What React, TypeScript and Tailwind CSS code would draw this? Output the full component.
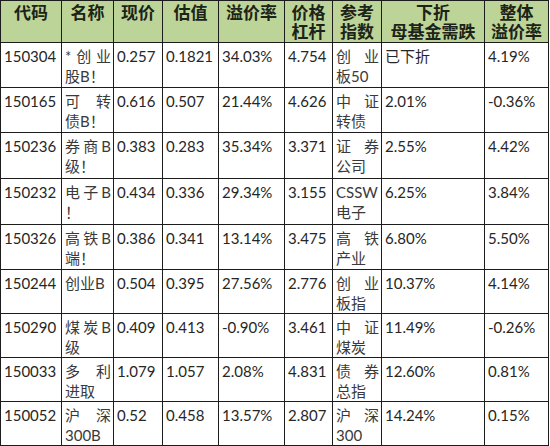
import React from 'react';

type Row = {
  code: string;
  name: string[];
  price: string;
  nav: string;
  premium: string;
  lever: string;
  index: string[];
  drop: string;
  total: string;
  h: string;
};

const rows: Row[] = [
  { code: '150304', name: ['*创业', '股B！'], price: '0.257', nav: '0.1821', premium: '34.03%', lever: '4.754', index: ['创业', '板50'], drop: '已下折', total: '4.19%', h: 'h-[45px]' },
  { code: '150165', name: ['可转', '债B！'], price: '0.616', nav: '0.507', premium: '21.44%', lever: '4.626', index: ['中证', '转债'], drop: '2.01%', total: '-0.36%', h: 'h-[45px]' },
  { code: '150236', name: ['券商B', '级！'], price: '0.383', nav: '0.283', premium: '35.34%', lever: '3.371', index: ['证券', '公司'], drop: '2.55%', total: '4.42%', h: 'h-[46px]' },
  { code: '150232', name: ['电子B', '！'], price: '0.434', nav: '0.336', premium: '29.34%', lever: '3.155', index: ['CSSW', '电子'], drop: '6.25%', total: '3.84%', h: 'h-[46px]' },
  { code: '150326', name: ['高铁B', '端！'], price: '0.386', nav: '0.341', premium: '13.14%', lever: '3.475', index: ['高铁', '产业'], drop: '6.80%', total: '5.50%', h: 'h-[45px]' },
  { code: '150244', name: ['创业B'], price: '0.504', nav: '0.395', premium: '27.56%', lever: '2.776', index: ['创业', '板指'], drop: '10.37%', total: '4.14%', h: 'h-[44px]' },
  { code: '150290', name: ['煤炭B', '级'], price: '0.409', nav: '0.413', premium: '-0.90%', lever: '3.461', index: ['中证', '煤炭'], drop: '11.49%', total: '-0.26%', h: 'h-[44px]' },
  { code: '150033', name: ['多利', '进取'], price: '1.079', nav: '1.057', premium: '2.08%', lever: '4.831', index: ['债券', '总指'], drop: '12.60%', total: '0.81%', h: 'h-[44px]' },
  { code: '150052', name: ['沪深', '300B'], price: '0.52', nav: '0.458', premium: '13.57%', lever: '2.807', index: ['沪深', '300'], drop: '14.24%', total: '0.15%', h: 'h-[43px]' },
];

const th = 'border border-[#1c1c1c] bg-[#bcd497] align-top p-0 pt-[2px] text-center font-bold text-[17px] text-[#1d2318]';
const td = 'border border-[#1c1c1c] align-top p-0 pl-[3px] pt-[3px] text-[15px] text-[#262626]';
const line = 'h-[20px] leading-[20px] overflow-hidden whitespace-nowrap [text-spacing-trim:space-all]';
const hline = 'h-[19px] leading-[19px] overflow-hidden whitespace-nowrap';

// fullwidth "！" taken from the CJK face so it keeps its full width
function Text({ s }: { s: string }) {
  const parts = s.split('！');
  return (
    <>
      {parts.map((p, i) => (
        <React.Fragment key={i}>
          {p}
          {i < parts.length - 1 && (
            <span className="inline-block w-[15px] text-center" style={{ fontFamily: "'Noto Sans CJK SC', sans-serif" }}>！</span>
          )}
        </React.Fragment>
      ))}
    </>
  );
}

// two-line wrapped cells: first line spread across the cell like Excel's distributed text
function Wrapped({ lines }: { lines: string[] }) {
  if (lines.length === 1) return <div className={`${line} text-[#3a3a3a]`}>{lines[0]}</div>;
  return (
    <>
      <div className={`${line} pr-[2px] text-justify [text-align-last:justify] text-[#3a3a3a]`}>{lines[0]}</div>
      <div className={`${line} text-[#3a3a3a]`}><Text s={lines[1]} /></div>
    </>
  );
}

function Head({ lines }: { lines: string[] }) {
  return (
    <>
      {lines.map((l) => (
        <div key={l} className={hline}>{l}</div>
      ))}
    </>
  );
}

export default function App() {
  return (
    <div className="w-[550px] h-[446px] bg-white overflow-hidden" style={{ fontFamily: "Lato, 'Noto Sans CJK SC', sans-serif" }}>
      <table className="table-fixed border-collapse w-[549px]">
        <colgroup>
          <col className="w-[61px]" />
          <col className="w-[52px]" />
          <col className="w-[49px]" />
          <col className="w-[56px]" />
          <col className="w-[66px]" />
          <col className="w-[48px]" />
          <col className="w-[49px]" />
          <col className="w-[103px]" />
          <col className="w-[64px]" />
        </colgroup>
        <thead>
          <tr className="h-[42px]">
            <th className={th}><Head lines={['代码']} /></th>
            <th className={th}><Head lines={['名称']} /></th>
            <th className={th}><Head lines={['现价']} /></th>
            <th className={th}><Head lines={['估值']} /></th>
            <th className={th}><Head lines={['溢价率']} /></th>
            <th className={th}><Head lines={['价格', '杠杆']} /></th>
            <th className={th}><Head lines={['参考', '指数']} /></th>
            <th className={th}><Head lines={['下折', '母基金需跌']} /></th>
            <th className={th}><Head lines={['整体', '溢价率']} /></th>
          </tr>
        </thead>
        <tbody>
          {rows.map((r) => (
            <tr key={r.code} className={r.h}>
              <td className={td}><div className={line}>{r.code}</div></td>
              <td className={td}><Wrapped lines={r.name} /></td>
              <td className={td}><div className={line}>{r.price}</div></td>
              <td className={td}><div className={line}>{r.nav}</div></td>
              <td className={td}><div className={line}>{r.premium}</div></td>
              <td className={td}><div className={line}>{r.lever}</div></td>
              <td className={td}><Wrapped lines={r.index} /></td>
              <td className={td}><div className={line}>{r.drop}</div></td>
              <td className={td}><div className={line}>{r.total}</div></td>
            </tr>
          ))}
        </tbody>
      </table>
    </div>
  );
}
